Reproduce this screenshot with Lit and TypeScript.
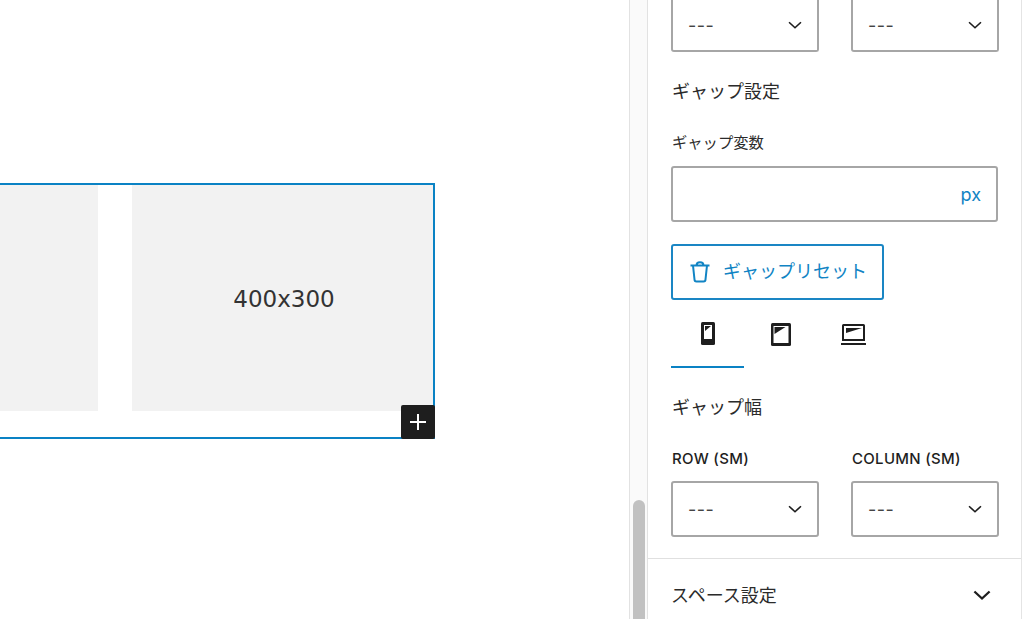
import { LitElement, html, css, svg } from "lit";
import { customElement } from "lit/decorators.js";

const chevron = (size: number, width: number) => html`<svg width=${size} height=${size} viewBox="0 0 24 24" fill="none" stroke="currentColor" stroke-width=${width}><path d="M5.500 9l6.500 6 6.500-6"/></svg>`;

const phone = svg`<rect width="14" height="23" rx="1.500" fill="#1e1e1e"/><path fill="#fff" d="M3 3h8v14H3z"/><path fill="#1e1e1e" d="M4 4h6L4 9z"/>`;
const tablet = svg`<rect width="20" height="23" rx="1.500" fill="#1e1e1e"/><path fill="#fff" d="M2.500 3h15v17h-15z"/><path fill="#1e1e1e" d="M3.500 4h11l-11 7z"/>`;
const laptop = svg`<path fill="#1e1e1e" fill-rule="evenodd" d="M2.500 0h20A1.500 1.500 0 0 1 24 1.500V17H1V1.500A1.500 1.500 0 0 1 2.500 0zM3 2v13h19V2z"/><path fill="#1e1e1e" d="M5 4h16L5 9zM0 19h25v2H0z"/>`;

@customElement("app-root")
export class AppRoot extends LitElement {
  static styles = css`
    :host { display: block; width: 1024px; height: 619px; overflow: hidden; background: #fff; }
    * { box-sizing: border-box; }
    .page { display: flex; width: 1024px; height: 619px; overflow: hidden; font-family: Inter, "Noto Sans CJK JP", sans-serif; color: #1e1e1e; }
    .canvas { width: 629px; flex: none; padding-top: 183px; }
    .block { position: relative; width: 435px; height: 256px; border: 2px solid #0a82c4; border-left: none; padding-bottom: 26px; display: flex; gap: 34px; }
    .ph { background: #f2f2f2; display: flex; align-items: center; justify-content: center; font: 23px "DejaVu Sans", sans-serif; color: #333; }
    .ph.a { width: 98px; flex: none; }
    .ph.b { flex: 1; padding: 1px 0 0 3px; }
    .add { position: absolute; right: -2px; bottom: -2px; width: 34px; height: 34px; background: #1e1e1e; border-radius: 2px; color: #fff; display: flex; align-items: center; justify-content: center; padding-bottom: 1px; }
    .track { width: 19px; flex: none; background: #fafafa; border-left: 1px solid #e2e2e2; border-right: 1px solid #e2e2e2; display: flex; flex-direction: column; justify-content: flex-end; align-items: center; }
    .thumb { width: 12px; height: 119px; background: #c1c1c1; border-radius: 6px 6px 0 0; }
    .side { width: 374px; flex: none; border-right: 1px solid #e4e4e4; display: flex; flex-direction: column; }
    .panel { padding: 0 23px; border-bottom: 1px solid #e0e0e0; height: 559px; flex: none; display: flex; flex-direction: column; }
    .row { display: grid; grid-template-columns: 148px 148px; column-gap: 32px; }
    .select { height: 56px; border: 2px solid #a6a6a6; border-radius: 3px; display: flex; align-items: center; justify-content: space-between; padding: 0 11px 0 15px; font-size: 18px; background: #fff; }
    .select.cut { height: 52px; border-top: none; border-radius: 0 0 3px 3px; }
    .dash { letter-spacing: 0.5px; color: #444; }
    h3 { margin: 26px 0 0 1px; font-weight: 400; font-size: 18px; line-height: 28px; height: 28px; color: #2b2b2b; }
    .lab { font-size: 15.300px; line-height: 20px; margin: 27px 0 0 1px; color: #2b2b2b; }
    .input { height: 56px; margin-top: 13px; border: 2px solid #a6a6a6; border-radius: 3px; display: flex; align-items: center; justify-content: flex-end; padding: 0 15px 0; color: #1184c4; font-size: 18px; }
    .input span { padding-top: 1px; }
    .btn { width: 213px; height: 56px; margin-top: 22px; border: 2px solid #1a86c4; border-radius: 3px; display: flex; align-items: center; color: #1184c4; font-size: 18px; padding-left: 17px; gap: 13px; }
    .btn span { padding-bottom: 4px; }
    .tabs { display: flex; height: 68px; }
    .tab { width: 73px; height: 68px; display: flex; align-items: center; justify-content: center; }
    .tab.on { border-bottom: 2.500px solid #0a82c4; }
    .h-gap { margin-top: 26px; }
    .cols { margin-top: 27px; }
    .cols span { font-size: 15px; font-weight: 500; line-height: 20px; color: #1e1e1e; letter-spacing: .3px; padding-left: 1px; }
    .r2 { margin-top: 12px; }
    .foot { display: flex; flex: none; align-items: center; justify-content: space-between; height: 72px; padding: 0 25px 0 23px; font-size: 18px; color: #2b2b2b; }
    .foot span { padding-bottom: 2px; }
    .foot svg { color: #1e1e1e; }
  `;

  render() {
    const sel = (cut = false) => html`<div class="select ${cut ? "cut" : ""}"><span class="dash">---</span>${chevron(22, 1.8)}</div>`;
    return html`<div class="page">
      <main class="canvas">
        <div class="block">
          <div class="ph a"></div>
          <div class="ph b">400x300</div>
          <div class="add"><svg width="18" height="18" viewBox="0 0 18 18" fill="none" stroke="#fff" stroke-width="2"><path d="M9 1v16M1 9h16"/></svg></div>
        </div>
      </main>
      <div class="track"><div class="thumb"></div></div>
      <aside class="side">
        <div class="panel">
          <div class="row">${sel(true)}${sel(true)}</div>
          <h3>ギャップ設定</h3>
          <div class="lab">ギャップ変数</div>
          <div class="input"><span>px</span></div>
          <div class="btn"><svg width="20" height="22" viewBox="0 0 20 22" fill="none" stroke="currentColor" stroke-width="2"><path d="M.5 4.500h19M3 4.500l1.500 14a2 2 0 0 0 2 2h7a2 2 0 0 0 2-2l1.500-14M6.500 4.500c0-4.500 7-4.500 7 0"/></svg><span>ギャップリセット</span></div>
          <div class="tabs">
            <div class="tab on"><svg width="14" height="23" viewBox="0 0 14 23">${phone}</svg></div>
            <div class="tab"><svg width="20" height="23" viewBox="0 0 20 23">${tablet}</svg></div>
            <div class="tab"><svg width="25" height="21" viewBox="0 0 25 21">${laptop}</svg></div>
          </div>
          <h3 class="h-gap">ギャップ幅</h3>
          <div class="row cols"><span>ROW (SM)</span><span>COLUMN (SM)</span></div>
          <div class="row r2">${sel()}${sel()}</div>
        </div>
        <div class="foot"><span>スペース設定</span>${chevron(28, 2)}</div>
      </aside>
    </div>`;
  }
}
